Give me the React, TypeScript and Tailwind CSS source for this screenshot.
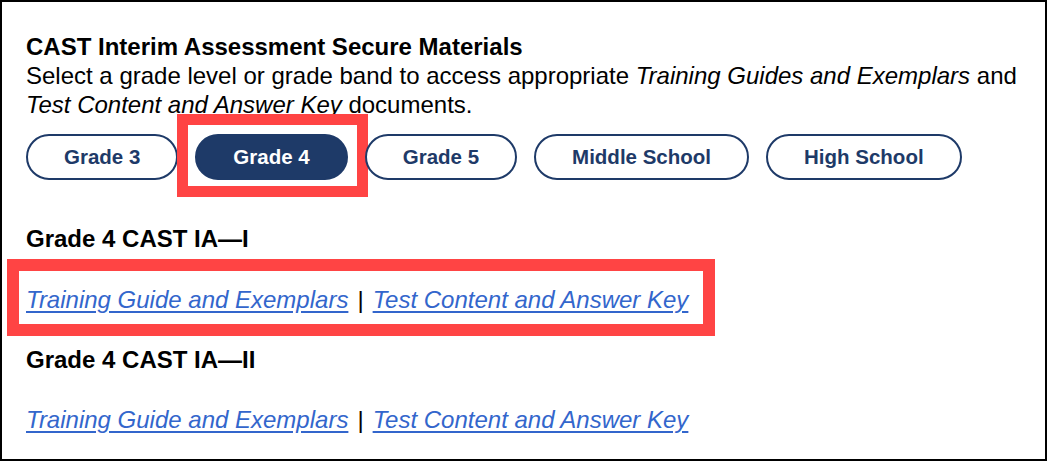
import { useState } from "react";

const grades = ["Grade 3", "Grade 4", "Grade 5", "Middle School", "High School"];

function Links() {
  return (
    <p className="text-[24px] leading-[28.8px] italic">
      <a href="#" className="text-[#3366cc] underline underline-offset-[3px]">
        Training Guide and Exemplars
      </a>
      <span className="not-italic text-black mx-[9px]">|</span>
      <a href="#" className="text-[#3366cc] underline underline-offset-[3px]">
        Test Content and Answer Key
      </a>
    </p>
  );
}

export default function App() {
  const [selected, setSelected] = useState<string>("Grade 4");

  return (
    <div
      className="w-[1047px] h-[461px] border-2 border-black bg-white text-black overflow-hidden"
      style={{ fontFamily: '"Liberation Sans", Arial, sans-serif' }}
    >
      <div className="pl-[24px] pr-[24px] pt-[31px]">
        <h2 className="text-[24px] leading-[28.8px] font-bold">
          CAST Interim Assessment Secure Materials
        </h2>
        <p className="text-[24px] leading-[28.8px]">
          Select a grade level or grade band to access appropriate <em>Training Guides and Exemplars</em> and{" "}
          <em>Test Content and Answer Key</em> documents.
        </p>

        <div className="flex gap-[17px] mt-[15px]">
          {grades.map((grade) => {
            const active = grade === selected;
            return (
              <div key={grade} className="relative">
                {active && (
                  <span className="absolute left-[-18px] top-[-20px] w-[191px] h-[83px] border-[11px] border-[#ff4444] pointer-events-none" />
                )}
                <button
                  onClick={() => setSelected(grade)}
                  className={`relative h-[46px] px-[36px] rounded-full border-2 border-[#1e3a68] text-[20.5px] font-bold ${
                    active ? "bg-[#1e3a68] text-white" : "bg-white text-[#1e3a68]"
                  }`}
                >
                  {grade}
                </button>
              </div>
            );
          })}
        </div>

        <h3 className="text-[24px] leading-[28.8px] font-bold mt-[45px]">{selected} CAST IA—I</h3>
        <div className="relative w-fit mt-[32px]">
          <span className="absolute left-[-19px] top-[-27px] w-[708px] h-[77px] border-[12px] border-[#ff4444] pointer-events-none" />
          <Links />
        </div>

        <h3 className="text-[24px] leading-[28.8px] font-bold mt-[31px]">{selected} CAST IA—II</h3>
        <div className="mt-[31px]">
          <Links />
        </div>
      </div>
    </div>
  );
}
